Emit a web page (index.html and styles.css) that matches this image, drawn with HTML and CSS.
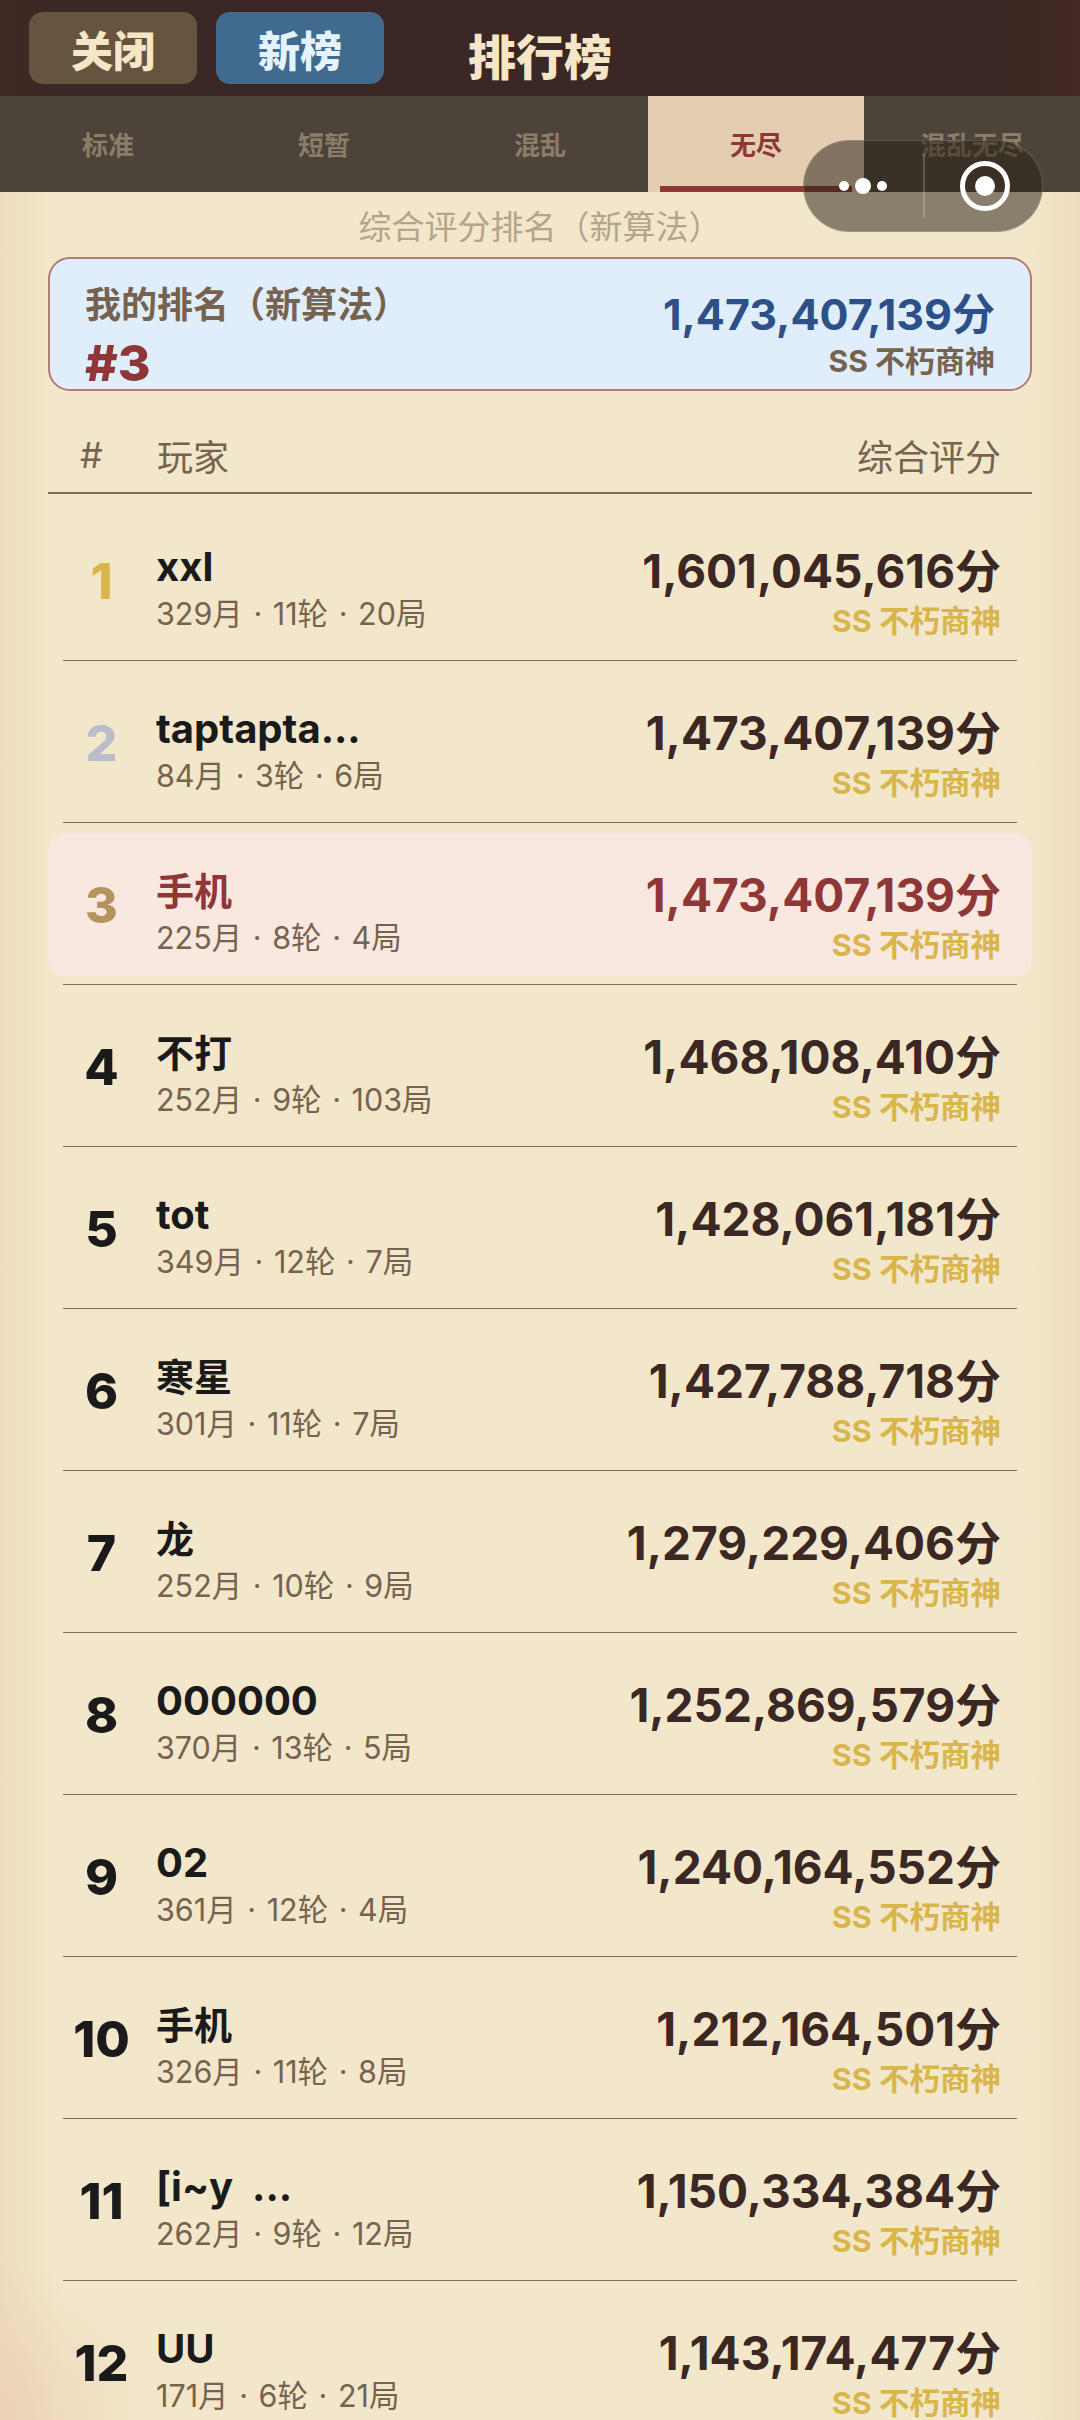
FILE: index.html
```html
<!DOCTYPE html>
<html lang="zh-CN">
<head>
    <meta charset="UTF-8">
    <meta name="viewport" content="width=device-width, initial-scale=1.0">
    <title>排行榜</title>
    <link rel="stylesheet" href="styles.css">
</head>
<body>
    <div class="page">
        <div class="top-bar">
            <div class="top-btn close-btn">关闭</div>
            <div class="top-btn new-btn">新榜</div>
            <div class="top-title">排行榜</div>
        </div>
        <div class="tabs">
            <div class="tab">标准</div>
            <div class="tab">短暂</div>
            <div class="tab">混乱</div>
            <div class="tab tab-active">无尽</div>
            <div class="tab">混乱无尽</div>
        </div>
        <div class="subtitle">综合评分排名（新算法）</div>

        <div class="my-card">
            <div>
                <div class="my-label">我的排名（新算法）</div>
                <div class="my-rank">#3</div>
            </div>
            <div class="my-right">
                <div class="my-score">1,473,407,139分</div>
                <div class="my-title">SS 不朽商神</div>
            </div>
        </div>

        <div class="table-head">
            <div class="head-rank">#</div>
            <div class="head-player">玩家</div>
            <div class="head-score">综合评分</div>
        </div>

        <div class="row row-first">
            <div class="row-inner">
                <div class="rank rank-gold">1</div>
                <div class="info"><div class="name">xxl</div><div class="meta">329月 <i>·</i> 11轮 <i>·</i> 20局</div></div>
                <div class="right"><div class="score">1,601,045,616分</div><div class="grade">SS 不朽商神</div></div>
            </div>
        </div>
        <div class="row">
            <div class="row-inner">
                <div class="rank rank-silver">2</div>
                <div class="info"><div class="name">taptapta...</div><div class="meta">84月 <i>·</i> 3轮 <i>·</i> 6局</div></div>
                <div class="right"><div class="score">1,473,407,139分</div><div class="grade">SS 不朽商神</div></div>
            </div>
        </div>
        <div class="row row-me">
            <div class="row-inner">
                <div class="rank rank-bronze">3</div>
                <div class="info"><div class="name name-cjk">手机</div><div class="meta">225月 <i>·</i> 8轮 <i>·</i> 4局</div></div>
                <div class="right"><div class="score">1,473,407,139分</div><div class="grade">SS 不朽商神</div></div>
            </div>
        </div>
        <div class="row">
            <div class="row-inner">
                <div class="rank">4</div>
                <div class="info"><div class="name name-cjk">不打</div><div class="meta">252月 <i>·</i> 9轮 <i>·</i> 103局</div></div>
                <div class="right"><div class="score">1,468,108,410分</div><div class="grade">SS 不朽商神</div></div>
            </div>
        </div>
        <div class="row">
            <div class="row-inner">
                <div class="rank">5</div>
                <div class="info"><div class="name">tot</div><div class="meta">349月 <i>·</i> 12轮 <i>·</i> 7局</div></div>
                <div class="right"><div class="score">1,428,061,181分</div><div class="grade">SS 不朽商神</div></div>
            </div>
        </div>
        <div class="row">
            <div class="row-inner">
                <div class="rank">6</div>
                <div class="info"><div class="name name-cjk">寒星</div><div class="meta">301月 <i>·</i> 11轮 <i>·</i> 7局</div></div>
                <div class="right"><div class="score">1,427,788,718分</div><div class="grade">SS 不朽商神</div></div>
            </div>
        </div>
        <div class="row">
            <div class="row-inner">
                <div class="rank">7</div>
                <div class="info"><div class="name name-cjk">龙</div><div class="meta">252月 <i>·</i> 10轮 <i>·</i> 9局</div></div>
                <div class="right"><div class="score">1,279,229,406分</div><div class="grade">SS 不朽商神</div></div>
            </div>
        </div>
        <div class="row">
            <div class="row-inner">
                <div class="rank">8</div>
                <div class="info"><div class="name">000000</div><div class="meta">370月 <i>·</i> 13轮 <i>·</i> 5局</div></div>
                <div class="right"><div class="score">1,252,869,579分</div><div class="grade">SS 不朽商神</div></div>
            </div>
        </div>
        <div class="row">
            <div class="row-inner">
                <div class="rank">9</div>
                <div class="info"><div class="name">02</div><div class="meta">361月 <i>·</i> 12轮 <i>·</i> 4局</div></div>
                <div class="right"><div class="score">1,240,164,552分</div><div class="grade">SS 不朽商神</div></div>
            </div>
        </div>
        <div class="row">
            <div class="row-inner">
                <div class="rank">10</div>
                <div class="info"><div class="name name-cjk">手机</div><div class="meta">326月 <i>·</i> 11轮 <i>·</i> 8局</div></div>
                <div class="right"><div class="score">1,212,164,501分</div><div class="grade">SS 不朽商神</div></div>
            </div>
        </div>
        <div class="row">
            <div class="row-inner">
                <div class="rank">11</div>
                <div class="info"><div class="name">[i~y&nbsp; ...</div><div class="meta">262月 <i>·</i> 9轮 <i>·</i> 12局</div></div>
                <div class="right"><div class="score">1,150,334,384分</div><div class="grade">SS 不朽商神</div></div>
            </div>
        </div>
        <div class="row">
            <div class="row-inner">
                <div class="rank">12</div>
                <div class="info"><div class="name">UU</div><div class="meta">171月 <i>·</i> 6轮 <i>·</i> 21局</div></div>
                <div class="right"><div class="score">1,143,174,477分</div><div class="grade">SS 不朽商神</div></div>
            </div>
        </div>

        <div class="capsule">
            <div class="capsule-dots"><span></span><span class="dot-big"></span><span></span></div>
            <div class="capsule-line"></div>
            <div class="capsule-ring"><span></span></div>
        </div>
    </div>
</body>
</html>
```

FILE: styles.css
```css
* {
    box-sizing: border-box;
}
html, body {
    margin: 0;
    padding: 0;
}
body {
    font-family: Inter, "Noto Sans CJK SC", sans-serif;
    color: #1a1a1a;
}
.page {
    position: relative;
    width: 1080px;
    height: 2420px;
    overflow: hidden;
    background:
        radial-gradient(circle at 0 2420px, rgba(236, 208, 178, 0.8), rgba(236, 208, 178, 0) 160px),
        linear-gradient(to right, #eedcbd 0, #f3e7cb 60px, #f3e7cb 1020px, #eedcbd 1080px);
}

.top-bar {
    height: 96px;
    display: flex;
    align-items: center;
    padding: 0 29px;
    background: linear-gradient(to right, #3f2926 0, #3b2723 60px, #3b2723 1000px, #442926 1080px);
}
.top-btn {
    width: 168px;
    height: 72px;
    border-radius: 14px;
    display: flex;
    align-items: center;
    justify-content: center;
    font-size: 42px;
    font-weight: 900;
    margin-right: 19px;
}
.close-btn {
    background: #67543f;
    color: #f5e6c8;
}
.new-btn {
    background: #416a8f;
    color: #e5f3ff;
}
.top-title {
    margin-left: 65px;
    font-size: 48px;
    font-weight: 900;
    color: #f5e6c8;
    padding-top: 12px;
}

.tabs {
    display: flex;
    height: 96px;
    background: #4c443a;
}
.tab {
    width: 216px;
    display: flex;
    align-items: center;
    justify-content: center;
    font-size: 26px;
    font-weight: 700;
    color: #8b7d68;
    padding-bottom: 2px;
}
.tab-active {
    position: relative;
    background: #e5cdb2;
    color: #8f3636;
}
.tab-active::after {
    content: "";
    position: absolute;
    left: 12px;
    right: 12px;
    bottom: 0;
    height: 6px;
    background: #8f3636;
}

.subtitle {
    text-align: center;
    font-size: 33px;
    line-height: 44px;
    margin-top: 13px;
    color: #b3a58a;
}

.my-card {
    margin: 8px 48px 0;
    height: 134px;
    padding: 0 35px;
    display: flex;
    align-items: flex-start;
    justify-content: space-between;
    background: #e0eefc;
    border: 2px solid #b27b76;
    border-radius: 22px;
}
.my-label {
    margin-top: 21px;
    font-size: 36px;
    line-height: 50px;
    font-weight: 700;
    color: #76634f;
}
.my-rank {
    font-size: 50px;
    line-height: 66px;
    font-weight: 800;
    color: #8f3636;
}
.my-right {
    padding-top: 28px;
    text-align: right;
}
.my-score {
    font-size: 43px;
    line-height: 54px;
    font-weight: 700;
    color: #2d5088;
}
.my-title {
    margin-top: 2px;
    font-size: 30px;
    line-height: 36px;
    font-weight: 700;
    color: #76634f;
}

.table-head {
    margin: 0 48px;
    height: 103px;
    padding: 26px 31px 0 0;
    display: flex;
    align-items: center;
    border-bottom: 2px solid #7d6d54;
    font-size: 36px;
    color: #76634f;
}
.head-rank {
    width: 109px;
    padding-left: 32px;
}
.head-player {
    flex: 1;
}

.row {
    margin: 0 63px;
    padding: 10px 0 7px;
    height: 162px;
    border-bottom: 1.5px solid #7d6d54;
}
.row-first {
    height: 167px;
    padding-top: 15px;
}
.row-inner {
    height: 100%;
    padding-right: 16px;
    display: grid;
    grid-template-columns: 93px 1fr auto;
    align-items: center;
    border-radius: 18px;
}
.row-me .row-inner {
    margin: 0 -15px;
    padding: 0 31px 0 15px;
    background: #f9e8e0;
}
.row-me .name,
.row-me .score {
    color: #8f3636;
}
.rank {
    padding-right: 16px;
    text-align: center;
    font-size: 50px;
    font-weight: 800;
    color: #1a1a1a;
}
.rank-gold {
    color: #d9b64c;
}
.rank-silver {
    color: #babdc8;
}
.rank-bronze {
    color: #b5935f;
}
.info {
    padding-top: 14px;
}
.name {
    font-size: 40px;
    line-height: 50px;
    font-weight: 700;
    color: #1a1a1a;
}
.name-cjk {
    font-size: 38px;
}
.meta {
    font-size: 30.5px;
    line-height: 43px;
    color: #76634f;
}
.meta i {
    font-style: normal;
    margin: 0 2px;
}
.right {
    padding-top: 21px;
    text-align: right;
}
.score {
    font-size: 46px;
    line-height: 54px;
    font-weight: 700;
    color: #3b2723;
}
.grade {
    margin-top: 5px;
    font-size: 30.5px;
    line-height: 36px;
    font-weight: 700;
    color: #d9b64c;
}

.capsule {
    position: absolute;
    left: 803px;
    top: 140px;
    width: 240px;
    height: 92px;
    display: flex;
    align-items: center;
    border-radius: 46px;
    background: rgba(40, 33, 22, 0.52);
    border: 1.5px solid rgba(255, 255, 255, 0.18);
}
.capsule-dots {
    width: 119px;
    display: flex;
    align-items: center;
    justify-content: center;
    gap: 6px;
    padding-right: 2px;
}
.capsule-dots span {
    width: 10px;
    height: 10px;
    border-radius: 50%;
    background: #fff;
}
.capsule-dots .dot-big {
    width: 16px;
    height: 16px;
}
.capsule-line {
    width: 2px;
    height: 64px;
    background: rgba(255, 255, 255, 0.2);
}
.capsule-ring {
    width: 50px;
    height: 50px;
    margin-left: 35px;
    border: 5px solid #fff;
    border-radius: 50%;
    display: flex;
    align-items: center;
    justify-content: center;
}
.capsule-ring span {
    width: 20px;
    height: 20px;
    border-radius: 50%;
    background: #fff;
}
```
